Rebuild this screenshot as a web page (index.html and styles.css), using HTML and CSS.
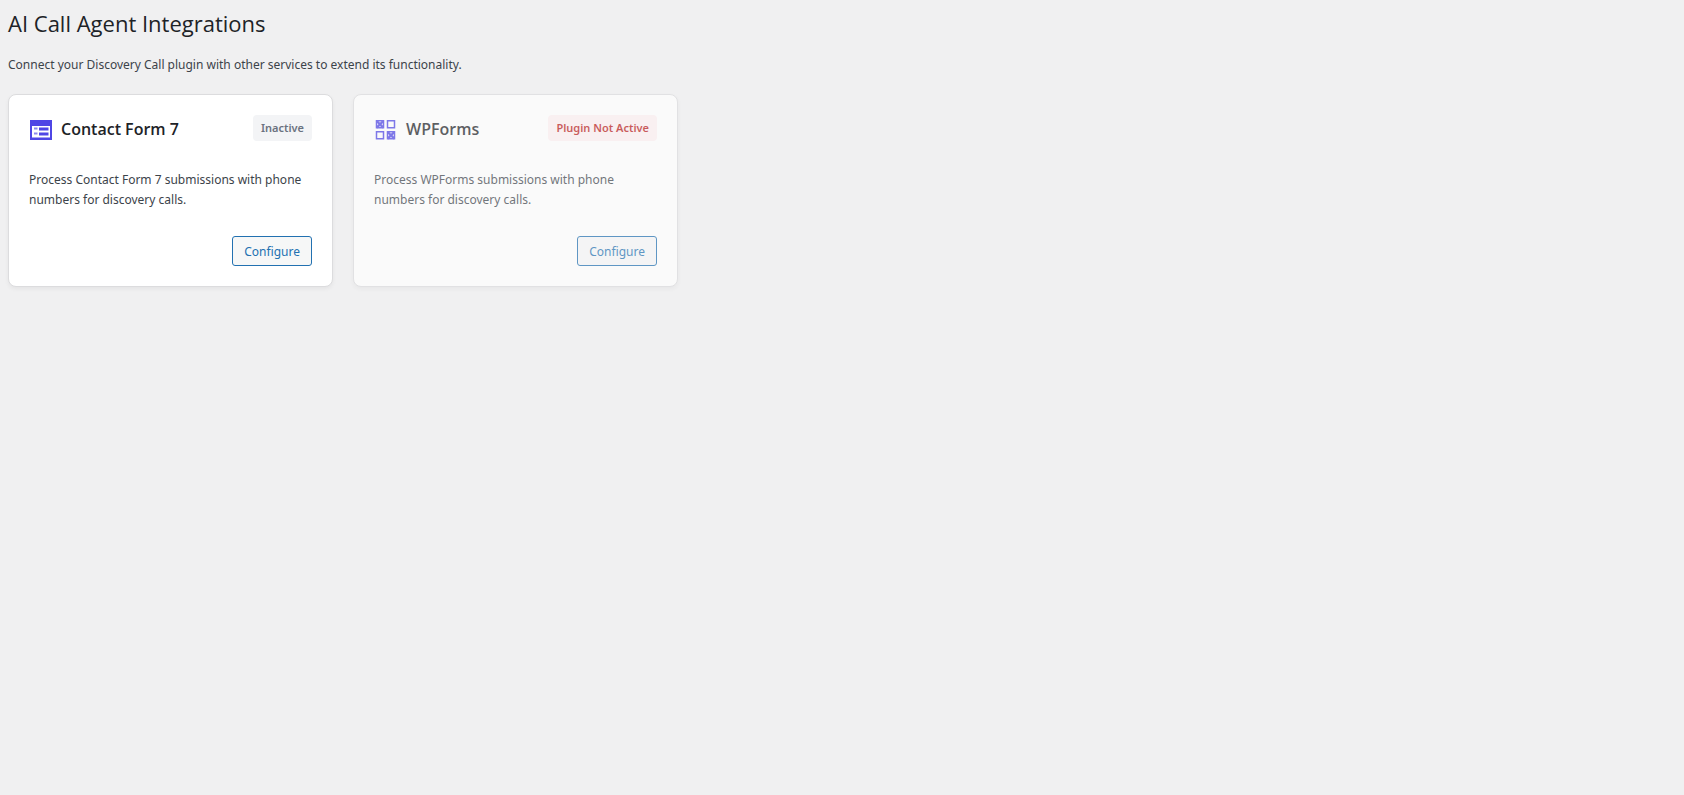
FILE: index.html
```html
<!DOCTYPE html>
<html lang="en">
<head>
<meta charset="utf-8">
<title>AI Call Agent Integrations</title>
<link rel="stylesheet" href="styles.css">
</head>
<body>
<main class="wrap">
  <h1 class="page-title">AI Call Agent Integrations</h1>
  <p class="intro">Connect your Discovery Call plugin with other services to extend its functionality.</p>
  <div class="grid">
    <article class="card">
      <header class="card-header">
        <svg class="icon" viewBox="0 0 24 24" aria-hidden="true">
          <path fill="currentColor" fill-rule="evenodd" d="M1 3h22v20H1zM3 9v11.500h18V9zM10 10.500h9.500V13.500H10zM10 15.500h9.500V18.500H10z"/>
          <path fill="currentColor" opacity="0.65" d="M5 10.500h3.500v2H5zM5 15.500h3.500v2H5z"/>
        </svg>
        <h2 class="card-title">Contact Form 7</h2>
        <span class="badge">Inactive</span>
      </header>
      <p class="card-text">Process Contact Form 7 submissions with phone numbers for discovery calls.</p>
      <footer class="card-footer"><button class="button" type="button">Configure</button></footer>
    </article>
    <article class="card card-disabled">
      <header class="card-header">
        <svg class="icon" viewBox="0 0 24 24" aria-hidden="true">
          <g fill="none" stroke="currentColor" stroke-width="1.5">
            <path d="M2.500 3.800h7v7h-7zM13.500 3.800h7v7h-7zM2.500 14.800h7v7h-7zM13.500 14.800h7v7h-7z"/>
            <path stroke-width="2.400" d="M2.700 4l6.600 6.600M9.300 4L2.700 10.600M13.700 15l6.600 6.600M20.300 15L13.700 21.600"/>
          </g>
        </svg>
        <h2 class="card-title">WPForms</h2>
        <span class="badge badge-error">Plugin Not Active</span>
      </header>
      <p class="card-text">Process WPForms submissions with phone numbers for discovery calls.</p>
      <footer class="card-footer"><button class="button" type="button">Configure</button></footer>
    </article>
  </div>
</main>
</body>
</html>
```
FILE: styles.css
```css
body {
  margin: 0;
  background: #f0f0f1;
  color: #3c434a;
  font: 12px/20px "Noto Sans", "Open Sans", sans-serif;
}
.wrap { padding: 8px; }
.page-title,
.card-title { font-family: "Open Sans", sans-serif; }
.page-title {
  margin: 0;
  color: #1d2327;
  font-size: 22px;
  font-weight: 400;
  line-height: 30px;
}
.intro { margin: 17px 0 19px; }
.grid {
  display: grid;
  grid-template-columns: repeat(auto-fill, minmax(300px, 325px));
  gap: 20px;
}
.card {
  padding: 20px;
  border: 1px solid #dcdcde;
  border-radius: 8px;
  background: #fff;
  box-shadow: 0 2px 4px rgba(0, 0, 0, 0.05);
}
.card-disabled { opacity: 0.7; }
.card-header { display: flex; align-items: flex-start; gap: 8px; }
.icon { width: 24px; height: 28px; color: #4f46e5; }
.card-title {
  flex: 1;
  margin: 0;
  color: #1d2327;
  font-size: 16px;
  font-weight: 600;
  line-height: 28px;
}
.badge {
  padding: 4px 8px;
  border-radius: 4px;
  background: #f3f4f6;
  color: #6b7280;
  font-size: 11px;
  font-weight: 600;
  line-height: 18px;
}
.badge-error { background: #fef0f1; color: #b91c1c; }
.card-text { margin: 27px 0 26px; }
.card-footer { display: flex; justify-content: flex-end; }
.button {
  padding: 1px 11px 0;
  border: 1px solid #2271b1;
  border-radius: 3px;
  background: #f6f7f7;
  color: #2271b1;
  font: inherit;
  line-height: 27px;
}
```
